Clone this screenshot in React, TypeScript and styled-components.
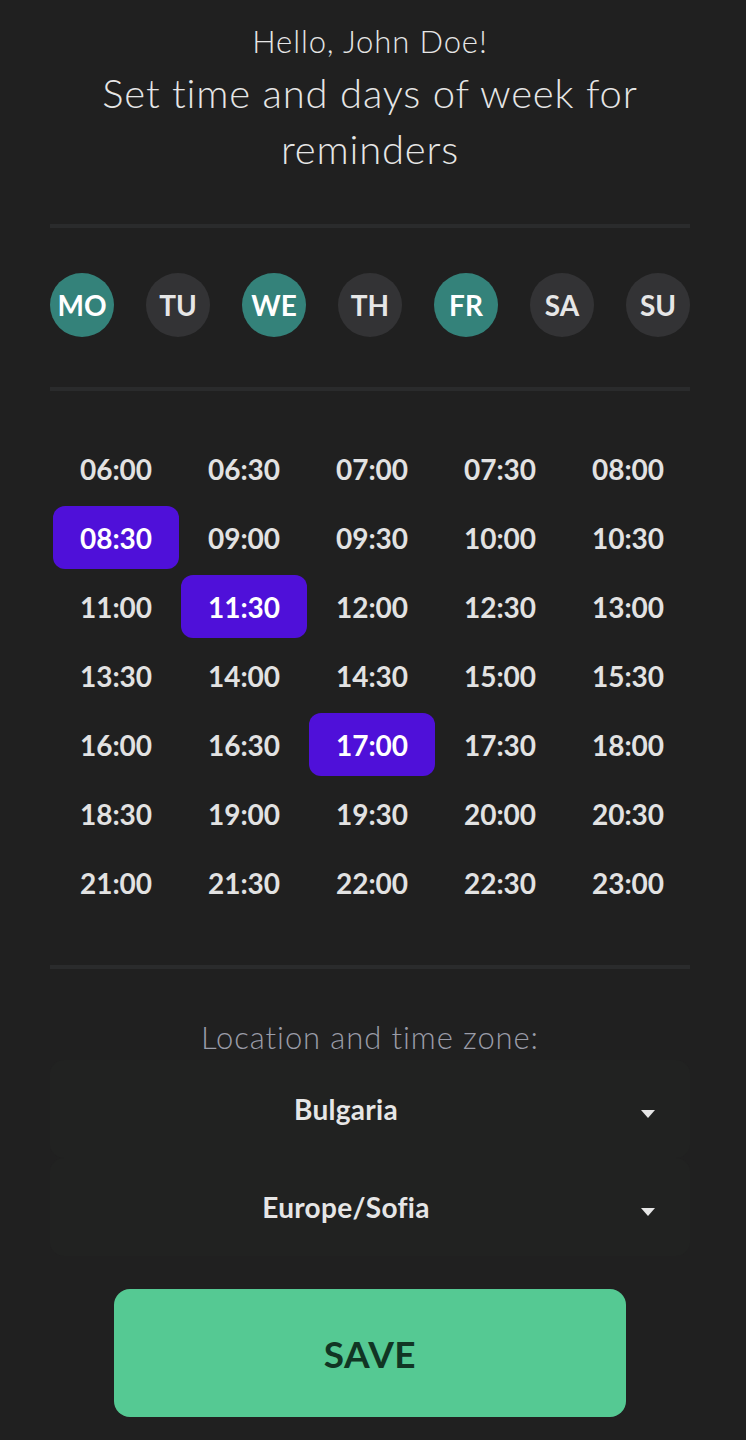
import React, { useState } from 'react'
import styled, { createGlobalStyle, css } from 'styled-components'

const GlobalStyle = createGlobalStyle`
  body {
    margin: 0;
    background: #202020;
    font-family: Lato, "Noto Sans", sans-serif;
    color: #e8e8e8;
  }
`

const Page = styled.div`
  width: 640px;
  margin: 0 0 0 50px;
  padding: 23px 0 22px;
  display: flex;
  flex-direction: column;
  align-items: stretch;
`

const Header = styled.header`
  display: flex;
  flex-direction: column;
  align-items: center;
  padding-bottom: 47px;
`

const Greeting = styled.div`
  font-size: 31px;
  font-weight: 300;
  line-height: 36px;
  letter-spacing: 0.9px;
  color: #e6e6e6;
`

const Title = styled.h1`
  margin: 6px 0 0;
  max-width: 560px;
  text-align: center;
  font-size: 40px;
  font-weight: 300;
  line-height: 56px;
  letter-spacing: 0.8px;
  color: #e6e6e6;
`

const Divider = styled.hr`
  margin: 0;
  border: none;
  height: 4px;
  background: #2a2b2c;
`

const DaysRow = styled.div`
  display: flex;
  justify-content: space-between;
  padding: 45px 0 50px;
`

interface ActiveProps {
  active?: boolean
}

const DayButton = styled.button<ActiveProps>`
  width: 64px;
  height: 64px;
  border-radius: 50%;
  border: none;
  padding: 0;
  display: flex;
  align-items: center;
  justify-content: center;
  font-family: inherit;
  font-size: 28px;
  font-weight: 700;
  color: #e6e6e6;
  background: #333335;
  cursor: pointer;

  ${props => props.active && css`
    background: #34827a;
    color: #ffffff;
  `}
`

const TimeGrid = styled.div`
  display: grid;
  grid-template-columns: repeat(5, 128px);
  grid-auto-rows: 69px;
  padding: 43px 0 48px 2px;
`

const TimeSlot = styled.button<ActiveProps>`
  margin: 3px 1px;
  border: none;
  border-radius: 12px;
  background: transparent;
  font-family: inherit;
  font-size: 28px;
  font-weight: 700;
  color: #e2e2e2;
  cursor: pointer;

  ${props => props.active && css`
    background: #4f10d9;
    color: #ffffff;
  `}
`

const Label = styled.div`
  margin-top: 50px;
  text-align: center;
  font-size: 31px;
  font-weight: 300;
  line-height: 36px;
  letter-spacing: 0.9px;
  color: #9a9ca8;
`

const SelectGroup = styled.div`
  display: flex;
  flex-direction: column;
  margin-top: 5px;
`

const SelectBox = styled.div`
  position: relative;
  height: 98px;
  display: flex;
  align-items: center;
  justify-content: center;
  background: #212221;
  border-radius: 14px;
  font-size: 28px;
  font-weight: 700;
  letter-spacing: 0.3px;
  color: #e6e6e6;
`

const SelectText = styled.span`
  margin-right: 48px;
`

const Caret = styled.span`
  position: absolute;
  right: 35px;
  top: 50%;
  margin-top: 1px;
  width: 0;
  height: 0;
  border-left: 7.5px solid transparent;
  border-right: 7.5px solid transparent;
  border-top: 8px solid #e6e6e6;
`

const SaveButton = styled.button`
  align-self: center;
  margin-top: 33px;
  width: 512px;
  height: 128px;
  border: none;
  border-radius: 16px;
  background: #55c993;
  color: #113524;
  font-family: inherit;
  font-size: 37px;
  font-weight: 700;
  letter-spacing: 0.5px;
  cursor: pointer;
`

const days = ['MO', 'TU', 'WE', 'TH', 'FR', 'SA', 'SU']

const times: string[] = []
for (let h = 6; h <= 23; h++) {
  const hh = h.toString().padStart(2, '0')
  times.push(`${hh}:00`)
  if (h < 23) times.push(`${hh}:30`)
}

const App = (): React.ReactElement => {
  const [activeDays, setActiveDays] = useState<string[]>(['MO', 'WE', 'FR'])
  const [activeTimes, setActiveTimes] = useState<string[]>(['08:30', '11:30', '17:00'])

  const toggleDay = (d: string) =>
    setActiveDays(prev => (prev.includes(d) ? prev.filter(x => x !== d) : [...prev, d]))
  const toggleTime = (t: string) =>
    setActiveTimes(prev => (prev.includes(t) ? prev.filter(x => x !== t) : [...prev, t]))

  return (
    <>
      <GlobalStyle />
      <Page>
        <Header>
          <Greeting>Hello, John Doe!</Greeting>
          <Title>Set time and days of week for reminders</Title>
        </Header>
        <Divider />
        <DaysRow>
          {days.map(d => (
            <DayButton key={d} active={activeDays.includes(d)} onClick={() => toggleDay(d)}>
              {d}
            </DayButton>
          ))}
        </DaysRow>
        <Divider />
        <TimeGrid>
          {times.map(t => (
            <TimeSlot key={t} active={activeTimes.includes(t)} onClick={() => toggleTime(t)}>
              {t}
            </TimeSlot>
          ))}
        </TimeGrid>
        <Divider />
        <Label>Location and time zone:</Label>
        <SelectGroup>
          <SelectBox>
            <SelectText>Bulgaria</SelectText>
            <Caret />
          </SelectBox>
          <SelectBox>
            <SelectText>Europe/Sofia</SelectText>
            <Caret />
          </SelectBox>
        </SelectGroup>
        <SaveButton>SAVE</SaveButton>
      </Page>
    </>
  )
}

export default App
